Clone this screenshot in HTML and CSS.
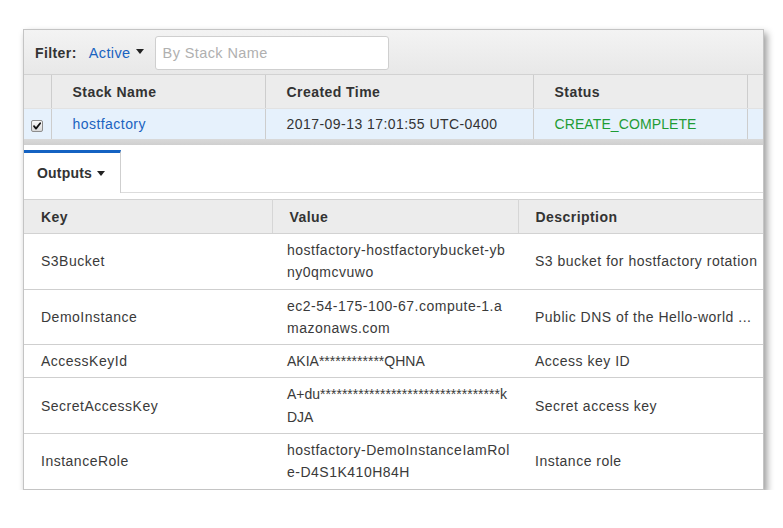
FILE: index.html
```html
<!DOCTYPE html>
<html>
<head>
<meta charset="utf-8">
<link rel="stylesheet" href="styles.css">
</head>
<body>
<div class="panel">
  <div class="filter-bar">
    <span class="filter-label">Filter:</span>
    <span class="filter-select">Active<span class="caret"></span></span>
    <input class="filter-input" type="text" placeholder="By Stack Name">
  </div>
  <table class="stacks">
    <colgroup>
      <col class="c-check"><col class="c-name"><col class="c-time"><col class="c-status"><col>
    </colgroup>
    <thead>
      <tr>
        <th></th>
        <th>Stack Name</th>
        <th>Created Time</th>
        <th>Status</th>
        <th></th>
      </tr>
    </thead>
    <tbody>
      <tr class="selected">
        <td class="check-cell">
          <span class="checkbox">
            <svg width="10" height="10" viewBox="0 0 10 10"><path d="M2 5.2 L4 7.6 L8.2 2.2" fill="none" stroke="#111" stroke-width="1.8" stroke-linecap="round" stroke-linejoin="round"/></svg>
          </span>
        </td>
        <td><span class="link">hostfactory</span></td>
        <td>2017-09-13 17:01:55 UTC-0400</td>
        <td class="ok">CREATE_COMPLETE</td>
        <td></td>
      </tr>
    </tbody>
  </table>
  <div class="splitter"></div>
  <div class="tabs">
    <div class="tab">Outputs<span class="caret"></span></div>
    <div class="tab-rest"></div>
  </div>
  <table class="outputs">
    <colgroup>
      <col class="c-key"><col class="c-value"><col>
    </colgroup>
    <thead>
      <tr><th>Key</th><th>Value</th><th>Description</th></tr>
    </thead>
    <tbody>
      <tr><td>S3Bucket</td><td class="val">hostfactory-hostfactorybucket-ybny0qmcvuwo</td><td>S3 bucket for hostfactory rotation</td></tr>
      <tr><td>DemoInstance</td><td class="val">ec2-54-175-100-67.compute-1.amazonaws.com</td><td>Public DNS of the Hello-world ...</td></tr>
      <tr><td>AccessKeyId</td><td class="val masked">AKIA************QHNA</td><td>Access key ID</td></tr>
      <tr><td>SecretAccessKey</td><td class="val masked">A+du*********************************kDJA</td><td>Secret access key</td></tr>
      <tr><td>InstanceRole</td><td class="val">hostfactory-DemoInstanceIamRole-D4S1K410H84H</td><td>Instance role</td></tr>
    </tbody>
  </table>
</div>
</body>
</html>
```

FILE: styles.css
```css
html, body {
  margin: 0;
  padding: 0;
  background: #ffffff;
}
body {
  font-family: "Liberation Sans", Arial, Helvetica, sans-serif;
  font-size: 14px;
  letter-spacing: 0.5px;
  color: #444444;
}
.panel {
  margin: 29px 0 0 23px;
  width: 741px;
  box-sizing: border-box;
  border: 1px solid #c4c4c4;
  background: #ffffff;
  box-shadow: 3px 4px 7px rgba(0, 0, 0, 0.4);
}
.filter-bar {
  box-sizing: border-box;
  display: flex;
  align-items: center;
  padding: 1px 0 0 11px;
  background: linear-gradient(#f3f3f3, #e8e8e8);
  border-bottom: 1px solid #d2d2d2;
  height: 45px;
}
.filter-label {
  font-weight: bold;
  color: #333333;
  letter-spacing: 0.4px;
}
.filter-select {
  margin-left: 12px;
  color: #1a63c0;
  font-size: 14.5px;
  letter-spacing: 0.4px;
  display: inline-flex;
  align-items: center;
}
.caret {
  display: inline-block;
  width: 0;
  height: 0;
  border-left: 4px solid transparent;
  border-right: 4px solid transparent;
  border-top: 5px solid #222222;
  margin-left: 5px;
  position: relative;
  top: -1px;
}
.filter-input {
  margin-left: 11px;
  width: 234px;
  height: 34px;
  box-sizing: border-box;
  border: 1px solid #cfcfcf;
  border-radius: 3px;
  padding: 0 7px;
  font-family: "Liberation Sans", Arial, sans-serif;
  font-size: 14.5px;
  letter-spacing: 0.4px;
  color: #444;
  background: #ffffff;
  outline: none;
}
.filter-input::placeholder {
  color: #b0b0b0;
}
table {
  border-collapse: collapse;
  table-layout: fixed;
  width: 100%;
}
.c-check { width: 27px; }
.c-name { width: 214px; }
.c-time { width: 268px; }
.c-status { width: 214px; }
.stacks th {
  background: #ececec;
  height: 33px;
  padding: 0 0 0 21px;
  text-align: left;
  font-weight: bold;
  color: #333333;
  letter-spacing: 0.45px;
  border-right: 1px solid #cdcdcd;
  border-bottom: 1px solid #e2e2e2;
}
.stacks th:last-child, .stacks td:last-child { border-right: none; }
.stacks td {
  height: 30px;
  padding: 0 0 0 21px;
  color: #333333;
  letter-spacing: 0.45px;
  border-right: 1px solid #cdcdcd;
}
.stacks .selected td {
  background: #e6f1fc;
}
.stacks td.check-cell {
  padding: 0 0 0 6px;
}
.checkbox {
  display: inline-flex;
  align-items: center;
  justify-content: center;
  width: 12px;
  height: 12px;
  box-sizing: border-box;
  border: 1px solid #8d8d8d;
  border-radius: 2px;
  background: linear-gradient(#fafafa, #d9d9d9);
  vertical-align: middle;
  position: relative;
  top: 1px;
  left: 1px;
}
.link { color: #1a63c0; }
.stacks td.ok {
  color: #1e9c34;
  letter-spacing: 0.1px;
}
.splitter {
  height: 6px;
  background: linear-gradient(#d9d9d9, #cfcfcf);
}
.tabs {
  display: flex;
  margin-top: 5px;
  height: 43px;
}
.tab {
  width: 97px;
  box-sizing: border-box;
  border-top: 3px solid #1462c2;
  border-right: 1px solid #cfcfcf;
  padding: 0 0 0 13px;
  display: flex;
  align-items: center;
  font-weight: bold;
  letter-spacing: 0.2px;
  color: #333333;
}
.tab .caret { margin-left: 5px; top: 0; }
.tab-rest {
  flex: 1;
  border-bottom: 1px solid #dcdcdc;
}
.outputs {
  margin-top: 6px;
}
.c-key { width: 248px; }
.c-value { width: 246px; }
.outputs th {
  background: #ececec;
  height: 33px;
  text-align: left;
  padding: 0 0 0 17px;
  font-weight: bold;
  color: #333333;
  letter-spacing: 0.45px;
  border-top: 1px solid #d2d2d2;
  border-bottom: 1px solid #d2d2d2;
  border-right: 1px solid #d6d6d6;
}
.outputs th:last-child { border-right: none; }
.outputs td {
  padding: 5px 7px 5px 17px;
  line-height: 22.3px;
  color: #3a3a3a;
  border-bottom: 1px solid #cfcfcf;
  vertical-align: middle;
  white-space: nowrap;
  overflow: hidden;
}
.outputs tr:last-child td { border-bottom: none; }
.outputs td.val {
  padding-left: 15px;
  white-space: normal;
  word-break: break-all;
}
.outputs td.masked {
  letter-spacing: 0;
}
```
